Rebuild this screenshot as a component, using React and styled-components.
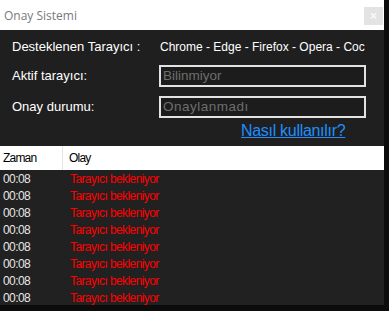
import React from "react";
import styled, { createGlobalStyle } from "styled-components";

const GlobalStyle = createGlobalStyle`
  html, body {
    margin: 0;
    padding: 0;
    background: #0c0c0c;
  }
`;

const logs = Array.from({ length: 8 }, () => ({
  time: "00:08",
  text: "Tarayıcı bekleniyor",
}));

function App() {
  return (
    <>
      <GlobalStyle />
      <StWindow>
        <StTitleBar>
          <StTitle>Onay Sistemi</StTitle>
          <StClose>×</StClose>
        </StTitleBar>
        <StForm>
          <StField>
            <StLabel>Desteklenen Tarayıcı :</StLabel>
            <StBrowsers>Chrome - Edge - Firefox - Opera - Coc</StBrowsers>
          </StField>
          <StField>
            <StLabel>Aktif tarayıcı:</StLabel>
            <StInput>Bilinmiyor</StInput>
          </StField>
          <StField>
            <StLabel>Onay durumu:</StLabel>
            <StInput $wide>Onaylanmadı</StInput>
          </StField>
          <StField $pull="-5px">
            <span />
            <StLink href="#">Nasıl kullanılır?</StLink>
          </StField>
        </StForm>
        <StList>
          <StHead>
            <StHeadCell $w="63px">Zaman</StHeadCell>
            <StHeadCell>Olay</StHeadCell>
          </StHead>
          {logs.map((log, i) => (
            <StRow key={i}>
              <StTime>{log.time}</StTime>
              <StEvent>{log.text}</StEvent>
            </StRow>
          ))}
        </StList>
      </StWindow>
    </>
  );
}

export default App;

const StWindow = styled.div`
  width: 384px;
  height: 305px;
  background: #1f1f1f;
  display: flex;
  flex-direction: column;
  overflow: hidden;
  font-family: "Liberation Sans", Arial, sans-serif;
`;

const StTitleBar = styled.div`
  flex: none;
  height: 30px;
  background: #ffffff;
  display: flex;
  align-items: center;
  justify-content: space-between;
  padding: 0 1px 0 4px;
`;

const StTitle = styled.div`
  font-family: "Open Sans", "Noto Sans", sans-serif;
  font-size: 12px;
  color: #7a7a7a;
`;

const StClose = styled.div`
  width: 19px;
  height: 18px;
  margin-top: 2px;
  background: #e3e3e3;
  color: #f8f8f8;
  font-size: 12px;
  font-weight: bold;
  display: flex;
  align-items: center;
  justify-content: center;
`;

const StForm = styled.div`
  flex: none;
  display: flex;
  flex-direction: column;
  gap: 9px;
  padding: 8px 0 6px 12px;
`;

const StField = styled.div`
  display: grid;
  grid-template-columns: 147px 207px;
  align-items: center;
  height: ${(p) => (p.$pull ? "18px" : "auto")};
  min-height: 18px;
  margin-top: ${(p) => p.$pull || "0"};
`;

const StLabel = styled.div`
  font-size: 13px;
  color: #ffffff;
  line-height: 18px;
`;

const StBrowsers = styled.div`
  font-size: 12px;
  color: #ffffff;
  padding-left: 1px;
  white-space: nowrap;
`;

const StInput = styled.div`
  box-sizing: border-box;
  height: 22px;
  border: 2px solid #e2e2e2;
  background: #1c1c1c;
  color: #6e6e6e;
  font-size: 13.5px;
  line-height: 18px;
  padding-left: 2px;
  letter-spacing: ${(p) => (p.$wide ? "0.5px" : "0")};
`;

const StLink = styled.a`
  justify-self: start;
  margin-left: 82px;
  font-size: 16px;
  letter-spacing: -0.3px;
  line-height: 18px;
  color: #1e8fff;
  text-decoration: underline;
`;

const StList = styled.div`
  flex: 1;
  min-height: 0;
  overflow: hidden;
  background: #212121;
`;

const StHead = styled.div`
  height: 24px;
  background: #ffffff;
  display: flex;
`;

const StHeadCell = styled.div`
  width: ${(p) => p.$w || "auto"};
  flex: ${(p) => (p.$w ? "none" : "1")};
  box-sizing: border-box;
  padding-left: ${(p) => (p.$w ? "3px" : "6px")};
  border-right: ${(p) => (p.$w ? "1px solid #e5e5e5" : "none")};
  font-size: 12px;
  letter-spacing: -0.8px;
  line-height: 24px;
  color: #000000;
`;

const StRow = styled.div`
  height: 17px;
  display: flex;
  align-items: center;
  font-size: 12px;
  letter-spacing: -0.6px;
`;

const StTime = styled.div`
  width: 63px;
  padding-left: 3px;
  box-sizing: border-box;
  color: #e6e6e6;
`;

const StEvent = styled.div`
  padding-left: 7px;
  color: #ff0000;
`;
